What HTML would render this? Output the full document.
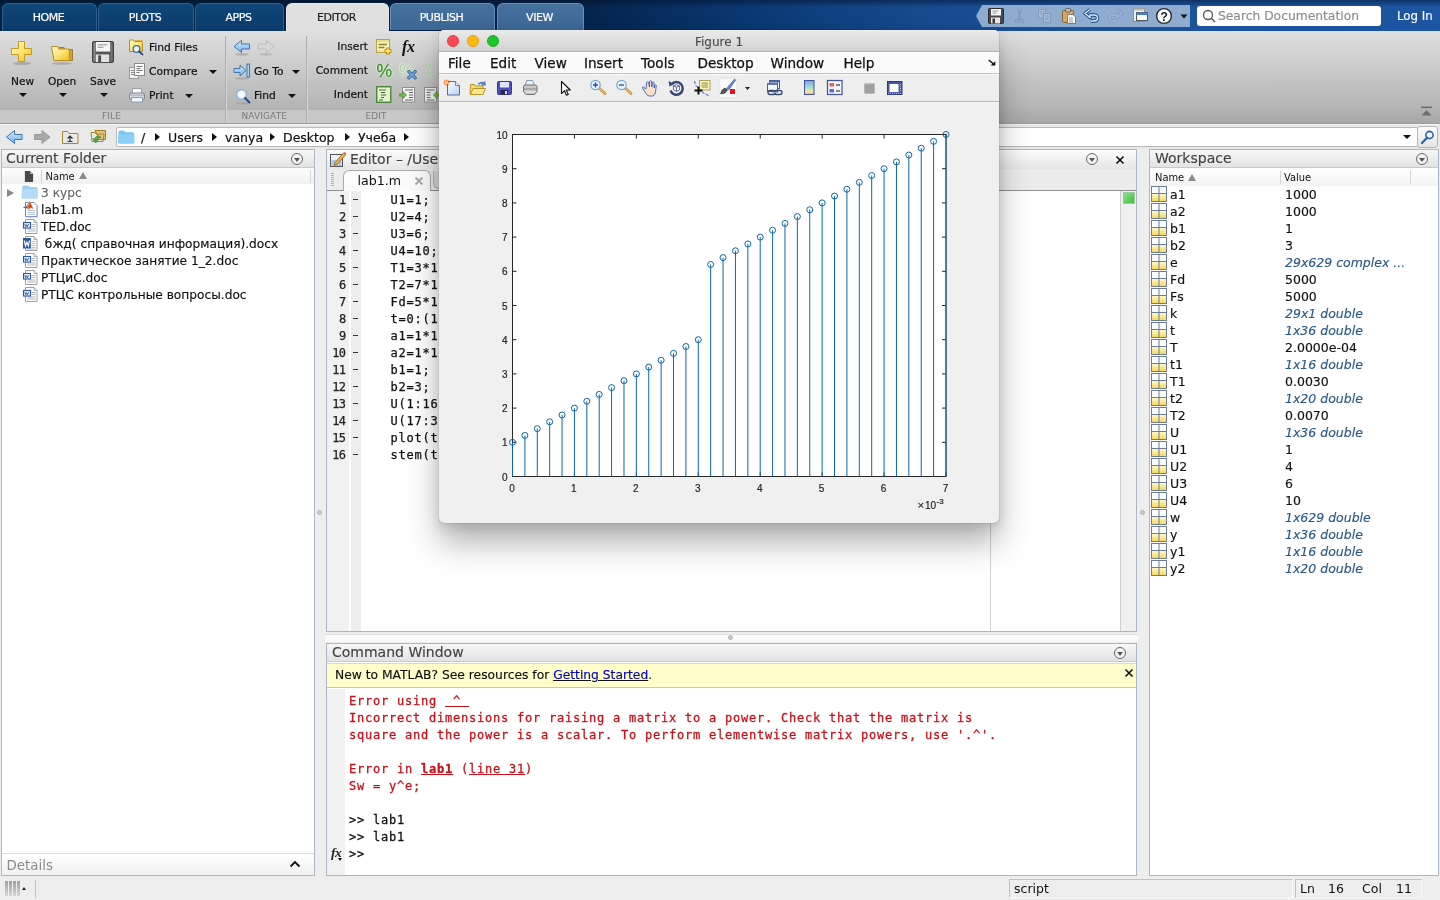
<!DOCTYPE html>
<html lang="ru">
<head>
<meta charset="utf-8">
<title>MATLAB</title>
<style>
*{box-sizing:border-box;margin:0;padding:0}
html,body{width:1440px;height:900px;overflow:hidden;background:#e6e6e6;font-family:"DejaVu Sans","Liberation Sans",sans-serif;font-size:12px;color:#111}
.abs{position:absolute}
#root{position:absolute;left:0;top:0;width:1440px;height:900px;overflow:hidden;background:#eeeeee;will-change:transform;transform:translateZ(0)}
/* ---------- tab bar ---------- */
#tabbar{left:0;top:0;width:1440px;height:32px;background:linear-gradient(180deg,rgba(0,10,30,.45) 0,rgba(0,10,30,0) 7px),linear-gradient(90deg,#04213f 0,#04234a 40%,#0a3872 52%,#164a8e 64%,#1b519a 75%,#1c55a2 100%)}
.tab{position:absolute;top:8px;height:24px;border-radius:6px 6px 0 0;background:linear-gradient(180deg,#0f4679 0,#0b3a6a 100%);border:1px solid #2f5f90;border-bottom:none;color:#fff;font-size:11px;text-align:center;line-height:19px;letter-spacing:-.45px;padding-right:2px;-webkit-text-stroke:.2px currentColor}
.tab.lite{background:linear-gradient(180deg,#46709e,#3d6896);border-color:#6d8fb5}
.tab.act{top:3px;height:29px;background:#e0e0e0;border-color:#e8e8e8;color:#222;line-height:27px}
/* ---------- toolstrip ---------- */
#strip{left:0;top:31px;width:1440px;height:93px;background:linear-gradient(180deg,#dfdfdf 0,#d0d0d0 30%,#b6b6b6 80%,#a6a6a6 100%)}
#striplab{left:0;top:110px;width:999px;height:13px;background:#c8c8c8}
.sl{position:absolute;top:111px;font-size:9px;line-height:11px;color:#7a7a7a;letter-spacing:.1px}
.tb{position:absolute;font-size:12px;color:#111;white-space:nowrap;-webkit-text-stroke:.2px #111}
.dn{position:absolute;width:0;height:0;border-left:4px solid transparent;border-right:4px solid transparent;border-top:4px solid #111}
.vsep{position:absolute;top:36px;width:1px;height:86px;background:#adadad;box-shadow:1px 0 0 #d6d6d6}
/* ---------- address bar ---------- */
#addr{left:0;top:124px;width:1440px;height:25px;background:#e9e9e9;border-top:1px solid #f4f4f4}
#addrbox{left:116px;top:127px;width:1302px;height:20px;background:#fff;border:1px solid #b9b9b9;border-radius:2px}
.crumb{position:absolute;top:130px;font-size:12.500px;color:#111;white-space:nowrap;-webkit-text-stroke:.2px #111}
.tri{position:absolute;width:0;height:0;border-top:4px solid transparent;border-bottom:4px solid transparent;border-left:5px solid #111}
/* ---------- panels ---------- */
.panel{position:absolute;background:#fff;border:1px solid #a9b7c6}
.ptitle{position:absolute;left:0;top:0;right:0;height:18px;background:linear-gradient(180deg,#f7f7f7,#e3e3e3);border-bottom:1px solid #c9c9c9;font-size:14px;color:#444;line-height:17px;padding-left:4px;white-space:nowrap;overflow:hidden;-webkit-text-stroke:.15px #444}
.pbtn{position:absolute;top:3px;width:12px;height:12px;border:1px solid #666;border-radius:50%;background:#f4f4f4}
.pbtn:after{content:"";position:absolute;left:2px;top:3.5px;border-left:3px solid transparent;border-right:3px solid transparent;border-top:4px solid #555}
.row{position:absolute;font-size:12.5px;white-space:nowrap;color:#111;-webkit-text-stroke:.15px currentColor}
.ln{left:0;width:18.500px;margin-top:1px;text-align:right;font-size:12px;letter-spacing:-.6px;line-height:17px;color:#222;-webkit-text-stroke:.25px #222}
.cd{left:63.500px;margin-top:1px;font-size:12px;letter-spacing:.776px;line-height:17px;color:#111;white-space:pre;-webkit-text-stroke:.25px #111}
.cw{left:22px;margin-top:1px;font-size:12px;letter-spacing:.776px;line-height:17px;color:#111;white-space:pre;-webkit-text-stroke:.28px currentColor}
.mono{font-family:"DejaVu Sans Mono","Liberation Mono",monospace}
</style>
</head>
<body>
<div id="root">

<!-- TABBAR -->
<div id="tabbar" class="abs">
<div class="tab" style="left:2px;width:95px;top:3px;height:29px;line-height:27px">HOME</div>
<div class="tab" style="left:98px;width:96px;top:3px;height:29px;line-height:27px">PLOTS</div>
<div class="tab" style="left:195px;width:89px;top:3px;height:29px;line-height:27px">APPS</div>
<div class="tab act" style="left:286px;width:103px">EDITOR</div>
<div class="tab lite" style="left:390px;width:105px;top:3px;height:27px;line-height:27px">PUBLISH</div>
<div class="tab lite" style="left:497px;width:87px;top:3px;height:27px;line-height:27px">VIEW</div>
<!-- quick access -->
<div class="abs" style="left:976px;top:5px;width:214px;height:22px;background:#8eabd0;clip-path:polygon(0 50%,6px 0,100% 0,100% 100%,6px 100%)"></div>
<svg class="abs" style="left:977px;top:5px" width="214" height="22" viewBox="977 5 214 22">
<!-- save -->
<rect x="988.500" y="8.500" width="15" height="15" rx="1" fill="#4a4a4a" stroke="#2c2c2c"/><rect x="991" y="9" width="10" height="6.500" fill="#f4f4f4"/><path d="M992.500 11h6M992.500 13h4" stroke="#888" stroke-width=".8"/><rect x="991" y="17.500" width="9" height="6" fill="#e8e8e8"/><rect x="992.500" y="18.500" width="2.500" height="5" fill="#3a3a3a"/>
<!-- cut faded -->
<g fill="none" stroke="#7d98bd" stroke-width="1.100"><path d="M1021.500 8.500l-3 11M1017.500 8.500l3 11"/><circle cx="1017" cy="21" r="1.800"/><circle cx="1022" cy="21" r="1.800"/></g>
<!-- copy faded -->
<g fill="#a4bad6" stroke="#7d98bd" stroke-width=".9"><rect x="1038.500" y="9.500" width="7" height="8.500"/><rect x="1043.500" y="13.500" width="7" height="9"/></g><path d="M1040 12h4M1040 14h3M1045 16h4M1045 18h4M1045 20h4" stroke="#7d98bd" stroke-width=".7"/>
<!-- paste -->
<rect x="1062.500" y="10.500" width="11" height="12" rx="1" fill="#d8a860" stroke="#8a6428"/><rect x="1065.500" y="8.500" width="5" height="3.500" rx="1" fill="#c0c0c0" stroke="#555" stroke-width=".8"/><path d="M1067.500 14.500h5.500l2.500 2.500v6.500h-8z" fill="#fafafa" stroke="#666" stroke-width=".8"/><path d="M1069 18h4M1069 20h4M1069 22h4" stroke="#777" stroke-width=".7"/>
<!-- undo -->
<path d="M1090 9.500l-5 4 5 4v-2.500h4q3.500 0 3.500 3t-3.500 3h-3.500" fill="none" stroke="#1c4a88" stroke-width="3.400" stroke-linejoin="round"/><path d="M1090 9.500l-5 4 5 4v-2.500h4q3.500 0 3.500 3t-3.500 3h-3.500" fill="none" stroke="#d8ecfa" stroke-width="1.500" stroke-linejoin="round"/>
<!-- redo faded -->
<path d="M1117 9.500l5 4-5 4v-2.500h-4q-3.500 0-3.500 3t3.500 3h3.500" fill="none" stroke="#7d98bd" stroke-width="3.200" stroke-linejoin="round"/><path d="M1117 9.500l5 4-5 4v-2.500h-4q-3.500 0-3.500 3t3.500 3h3.500" fill="none" stroke="#9fb8d8" stroke-width="1.400" stroke-linejoin="round"/>
<!-- windows -->
<rect x="1133.500" y="8.500" width="11" height="13" fill="#f0f0f0" stroke="#8a8a8a"/><rect x="1133.500" y="8.500" width="11" height="2" fill="#bcbcbc"/><rect x="1136.500" y="12.500" width="11" height="8" fill="#fafafa" stroke="#555"/><rect x="1136.500" y="12.500" width="11" height="2.500" fill="#4a80c0"/>
<!-- help -->
<circle cx="1164" cy="16" r="7.400" fill="#fdfdfd" stroke="#2a2a2a" stroke-width="1.400"/><text x="1164" y="20.500" text-anchor="middle" font-family="'Liberation Sans',sans-serif" font-weight="bold" font-size="12.500px" fill="#222">?</text>
<path d="M1180.500 14.500h7l-3.500 4z" fill="#111"/>
</svg>
<div class="abs" style="left:1197px;top:6px;width:184px;height:20px;background:#fff;border-radius:3px"></div>
<svg class="abs" style="left:1201px;top:8px" width="16" height="16" viewBox="0 0 16 16"><circle cx="7" cy="7" r="4.5" fill="none" stroke="#555" stroke-width="1.3"/><path d="M10.3 10.3L14 14" stroke="#555" stroke-width="1.5"/></svg>
<div class="abs" style="left:1218px;top:7px;font-size:12.300px;color:#8c8c8c;line-height:18px;white-space:nowrap;-webkit-text-stroke:.15px #8c8c8c">Search Documentation</div>
<div class="abs" style="left:1397px;top:7px;font-size:11.800px;color:#fff;line-height:18px;white-space:nowrap;-webkit-text-stroke:.15px #fff">Log In</div>
</div>
<!-- STRIP -->
<div id="strip" class="abs"></div>
<div id="striplab" class="abs"></div>
<div class="abs" style="left:0;top:123px;width:1440px;height:1px;background:#9c9c9c"></div>
<!-- FILE section -->
<svg class="abs" style="left:10px;top:40px" width="24" height="26" viewBox="0 0 24 26">
<defs><linearGradient id="gy" x1="0" y1="0" x2="1" y2="1"><stop offset="0" stop-color="#fffbd0"/><stop offset=".55" stop-color="#fbe36a"/><stop offset="1" stop-color="#e9b820"/></linearGradient></defs>
<ellipse cx="12" cy="23.5" rx="9" ry="1.6" fill="#8d8d8d" opacity=".55"/>
<path d="M8.5 1.5h6v7h7v6h-7v7h-6v-7h-7v-6h7z" fill="url(#gy)" stroke="#c79a1c" stroke-width="1" stroke-linejoin="round"/></svg>
<svg class="abs" style="left:50px;top:44px" width="25" height="22" viewBox="0 0 25 22">
<ellipse cx="12" cy="19.5" rx="10" ry="1.5" fill="#8d8d8d" opacity=".5"/>
<path d="M9 3.5h5l1 2h7.5v11h-4z" fill="#c9a24a" stroke="#a27b25" stroke-width="1"/>
<path d="M1.5 2.5h6l1.5 2.5h10l1 11.5h-16z" fill="url(#gy)" stroke="#b48d2c" stroke-width="1" stroke-linejoin="round"/></svg>
<svg class="abs" style="left:92px;top:41px" width="22" height="23" viewBox="0 0 23 24">
<rect x=".5" y=".5" width="22" height="22" rx="1.5" fill="#555" stroke="#3d3d3d"/>
<rect x="1.5" y="1.5" width="2" height="20" fill="#8c8c8c"/><rect x="19.5" y="1.5" width="2" height="20" fill="#777"/>
<rect x="4" y="1" width="15" height="10" fill="#f4f4f4"/><rect x="6" y="3.5" width="10" height="1" fill="#8a8a8a"/><rect x="6" y="6" width="6" height="1" fill="#8a8a8a"/>
<rect x="4" y="14" width="14" height="8" fill="#e2e2e2"/><rect x="6.500" y="15" width="3" height="7" fill="#4a4a4a"/></svg>
<div class="tb" style="left:11px;top:74px;font-size:10.6px;line-height:14px">New</div>
<div class="tb" style="left:48px;top:74px;font-size:10.6px;line-height:14px">Open</div>
<div class="tb" style="left:90px;top:74px;font-size:10.6px;line-height:14px">Save</div>
<div class="dn" style="left:19px;top:93px"></div><div class="dn" style="left:59px;top:93px"></div><div class="dn" style="left:100px;top:93px"></div>
<!-- find files -->
<svg class="abs" style="left:128px;top:38px" width="18" height="18" viewBox="0 0 18 18">
<path d="M1.5 2h4l1 1.500h8v10h-13z" fill="url(#gy)" stroke="#b48d2c"/><path d="M7 2.500h7.500v3" fill="none" stroke="#d9b256"/>
<circle cx="8.500" cy="11" r="3.300" fill="#eaf3fb" stroke="#3d6fa8" stroke-width="1.300"/><path d="M11 13.500l3.500 3" stroke="#2d4f7d" stroke-width="1.800" stroke-linecap="round"/></svg>
<div class="tb" style="left:149px;top:41px;font-size:10.700px;line-height:14px">Find Files</div>
<svg class="abs" style="left:128px;top:62px" width="18" height="18" viewBox="0 0 18 18">
<rect x="1.500" y="5.500" width="9" height="11" fill="#f3f3f3" stroke="#9a9a9a"/><path d="M3 8.500h5M3 10.500h4M3 12.500h5" stroke="#8a8a8a"/>
<rect x="6.500" y="1.500" width="10" height="12" fill="#fafafa" stroke="#8a8a8a"/><path d="M8.500 4.500h6M8.500 6.500h4M8.500 8.500h6M8.500 10.500h3" stroke="#777"/></svg>
<div class="tb" style="left:149px;top:65px;font-size:10.700px;line-height:14px">Compare</div><div class="dn" style="left:209px;top:70px"></div>
<svg class="abs" style="left:128px;top:87px" width="18" height="17" viewBox="0 0 18 17">
<rect x="4.500" y="1.500" width="9" height="5" fill="#fdfdfd" stroke="#9aa4b0"/><rect x="1.500" y="6" width="15" height="6.500" rx="1.500" fill="#d5dbe2" stroke="#7f8894"/>
<rect x="3.500" y="10.500" width="11" height="4.500" fill="#f2f6fb" stroke="#8d9fb8"/><rect x="2" y="7.500" width="14" height="1.200" fill="#aab3be"/></svg>
<div class="tb" style="left:149px;top:89px;font-size:10.700px;line-height:14px">Print</div><div class="dn" style="left:185px;top:94px"></div>
<div class="vsep" style="left:225px"></div>
<!-- NAVIGATE -->
<svg class="abs" style="left:233px;top:39px" width="42" height="17" viewBox="0 0 42 17">
<defs><linearGradient id="gb" x1="0" y1="0" x2="0" y2="1"><stop offset="0" stop-color="#d8ecfb"/><stop offset="1" stop-color="#6fb0e6"/></linearGradient></defs>
<ellipse cx="9" cy="15.300" rx="7" ry="1.200" fill="#8a8a8a" opacity=".5"/><ellipse cx="33" cy="15.300" rx="7" ry="1.200" fill="#8a8a8a" opacity=".35"/>
<path d="M1 7.500l7.500-6v3.500h8v5h-8v3.500z" fill="url(#gb)" stroke="#3a78b8" stroke-linejoin="round"/>
<path d="M41 7.500l-7.500-6v3.500h-8v5h8v3.500z" fill="#d8d8d8" stroke="#bdbdbd" stroke-linejoin="round"/></svg>
<svg class="abs" style="left:233px;top:63px" width="18" height="17" viewBox="0 0 18 17">
<ellipse cx="9" cy="15.500" rx="7" ry="1.100" fill="#8a8a8a" opacity=".45"/>
<path d="M1 5.500h6v-3.500l6 5.500-6 5.500v-3.500h-6z" fill="url(#gb)" stroke="#3a78b8" stroke-linejoin="round"/><rect x="14" y="1" width="2.500" height="13" fill="#a8d0f2" stroke="#3a78b8"/></svg>
<div class="tb" style="left:254px;top:65px;font-size:10.700px;line-height:14px">Go To</div><div class="dn" style="left:292px;top:70px"></div>
<svg class="abs" style="left:234px;top:88px" width="18" height="17" viewBox="0 0 18 17">
<ellipse cx="8" cy="15.500" rx="6" ry="1.100" fill="#8a8a8a" opacity=".4"/>
<circle cx="7.500" cy="6.500" r="4.800" fill="#f3f8fd" stroke="#8fb3d8" stroke-width="1.400"/><path d="M11 10l4.500 4.500" stroke="#2d4f86" stroke-width="2.200" stroke-linecap="round"/></svg>
<div class="tb" style="left:254px;top:89px;font-size:10.700px;line-height:14px">Find</div><div class="dn" style="left:288px;top:94px"></div>
<div class="vsep" style="left:306px"></div>
<!-- EDIT -->
<div class="tb" style="left:280px;width:88px;text-align:right;top:40px;font-size:10.700px;line-height:14px">Insert</div>
<div class="tb" style="left:280px;width:88px;text-align:right;top:64px;font-size:10.700px;line-height:14px">Comment</div>
<div class="tb" style="left:280px;width:88px;text-align:right;top:88px;font-size:10.700px;line-height:14px">Indent</div>
<svg class="abs" style="left:375px;top:38px" width="19" height="18" viewBox="0 0 19 18">
<rect x="1.500" y="1.500" width="13" height="13" fill="#fdf6b4" stroke="#b4a544"/><rect x="2" y="2" width="12" height="2.200" fill="#e9df88"/><rect x="2" y="12" width="12" height="2" fill="#eee4a0"/><path d="M3.500 6.500h8.500M3.500 9.500h6" stroke="#85803c" stroke-width="1.300"/>
<path d="M13 9.500v7M9.500 13h7" stroke="#b88a14" stroke-width="3.600"/><path d="M13 10.400v5.200M10.400 13h5.200" stroke="#ffe55c" stroke-width="1.800"/></svg>
<div class="abs" style="left:402px;top:37px;font-family:'Liberation Serif','DejaVu Serif',serif;font-style:italic;font-weight:bold;font-size:16px;line-height:20px;color:#111;letter-spacing:-.3px">fx</div>
<div class="abs" style="left:376.500px;top:60px;font-size:17.500px;line-height:22px;color:#3f9a2c;font-family:'Liberation Sans',sans-serif;text-shadow:0 0 1.500px #fff,0 0 1.500px #fff,0 0 2px #e8f8e0;-webkit-text-stroke:.3px #2f7f20">%</div>
<div class="abs" style="left:399px;top:60px;font-size:17px;line-height:22px;color:#a8d098;font-family:'Liberation Sans',sans-serif;text-shadow:0 0 1.500px #fff,0 0 1.500px #fff">%</div>
<svg class="abs" style="left:406.500px;top:70px" width="10" height="9.500" viewBox="0 0 12 12"><path d="M2 2l8 8M10 2l-8 8" stroke="#2d5f96" stroke-width="4" stroke-linecap="round"/><path d="M2 2l8 8M10 2l-8 8" stroke="#6fa8dc" stroke-width="2" stroke-linecap="round"/></svg>
<div class="abs" style="left:424.500px;top:63px;font-size:9.500px;line-height:7.500px;color:#7ab868;font-family:'Liberation Sans',sans-serif;width:10px;text-shadow:0 0 1.500px #fff,0 0 1px #fff">% %</div>
<svg class="abs" style="left:376px;top:86px" width="16" height="18" viewBox="0 0 16 18"><rect x=".750" y=".750" width="14" height="15.500" fill="#e4f2d0" stroke="#3f7f2f" stroke-width="1.300"/><path d="M3 4h7M5 6.500h4M5 9h5M5 11.500h3M3 14h4" stroke="#3f6f2f" stroke-width="1.100"/></svg>
<svg class="abs" style="left:399px;top:86px" width="18" height="18" viewBox="0 0 18 18"><rect x="3.500" y="1.500" width="12" height="14.500" fill="#f4f4f4" stroke="#8e8e8e"/><path d="M6 4h8M10 6.500h4M10 9h4M10 11.500h4M6 14h8" stroke="#666" stroke-width="1.100"/><path d="M0 8h4v-2.500l3.500 3.500-3.500 3.500v-2.500h-4z" fill="#7cc24c" stroke="#3f8f22" stroke-width=".8"/></svg>
<svg class="abs" style="left:424px;top:86px" width="18" height="18" viewBox="0 0 18 18"><rect x=".500" y="1.500" width="12" height="14.500" fill="#f4f4f4" stroke="#8e8e8e"/><path d="M2.500 4h8M2.500 6.500h4M2.500 9h4M2.500 11.500h4M2.500 14h8" stroke="#666" stroke-width="1.100"/><path d="M17 8h-4v-2.500l-3.500 3.500 3.500 3.500v-2.500h4z" fill="#7cc24c" stroke="#3f8f22" stroke-width=".8"/></svg>
<div class="sl" style="left:102px">FILE</div><div class="sl" style="left:241.500px">NAVIGATE</div><div class="sl" style="left:365.500px">EDIT</div>
<!-- collapse icon -->
<svg class="abs" style="left:1420px;top:105px" width="14" height="14" viewBox="0 0 14 14"><rect x="1" y="1.500" width="11" height="1.600" fill="#6e6e6e"/><path d="M6.500 5l5 5.500h-10z" fill="#6e6e6e"/></svg>
<!-- ADDR -->
<div id="addr" class="abs"></div>
<svg class="abs" style="left:5px;top:129px" width="104" height="17" viewBox="0 0 104 17">
<path d="M1.500 8l8-6.500v4h7.500v5h-7.500v4z" fill="url(#gb)" stroke="#3a78b8" stroke-linejoin="round"/>
<path d="M45 8l-8-6.500v4h-7.500v5h7.500v4z" fill="#a9a9a9" stroke="#9a9a9a" stroke-linejoin="round"/>
<path d="M57.500 2.500h5l1.500 2h9v10h-15.500z" fill="url(#gf)" stroke="#a8862c"/><path d="M65 12.500v-5M62.500 9.500l2.500-2.500 2.500 2.500M62.500 12.500h5" fill="none" stroke="#333" stroke-width="1.200"/>
<path d="M90 1.500h10.500v9h-6z" fill="#e4c47c" stroke="#a27b25"/><path d="M86 3.500h4l1 1.500h8l-1 7.500h-11z" fill="url(#gf)" stroke="#a8862c"/>
<path d="M96 8.500c-1.500-2.500-5.500-2-6 1.500l-2.200-.3 2.800 4.300 3.300-3.700-2-.2c.5-1.600 2.500-2 4.100-1.600z" fill="#5fae3a" stroke="#2f7a1c" stroke-width=".7"/></svg>
<div id="addrbox" class="abs"></div>
<svg class="abs" style="left:118px;top:129px" width="18" height="16" viewBox="0 0 18 16"><path d="M.500 3q0-1.500 1.500-1.500h4l1.500 1.700h7q1.500 0 1.500 1.500v8.300q0 1.500-1.500 1.500h-13q-1.500 0-1.500-1.500z" fill="#7cc4ee"/><path d="M.500 5.500h16v7.500q0 1.500-1.500 1.500h-13q-1.500 0-1.500-1.500z" fill="#8dd0f5"/></svg>
<div class="crumb" style="left:141px">/</div><div class="tri" style="left:155px;top:133px"></div>
<div class="crumb" style="left:168px">Users</div><div class="tri" style="left:212px;top:133px"></div>
<div class="crumb" style="left:225px">vanya</div><div class="tri" style="left:270px;top:133px"></div>
<div class="crumb" style="left:283px">Desktop</div><div class="tri" style="left:345px;top:133px"></div>
<div class="crumb" style="left:358px">Учеба</div><div class="tri" style="left:404px;top:133px"></div>
<div class="dn" style="left:1403px;top:135px"></div>
<div class="abs" style="left:1417px;top:126px;width:21px;height:22px;border:1px solid #b5b5b5;border-radius:3px;background:linear-gradient(#fdfdfd,#e4e4e4)"></div>
<svg class="abs" style="left:1420px;top:129px" width="16" height="16" viewBox="0 0 16 16"><circle cx="9.500" cy="6" r="3.600" fill="none" stroke="#2a63ad" stroke-width="1.600"/><path d="M7 8.800L2 14" stroke="#2a63ad" stroke-width="2.200" stroke-linecap="round"/></svg>
<!-- PANELS -->
<div class="panel" style="left:1px;top:149px;width:314px;height:727px">
<div class="ptitle">Current Folder</div><div class="pbtn" style="left:289px"></div>
<div class="abs" style="left:0;top:18px;width:312px;height:16px;background:linear-gradient(#fdfdfd,#f1f1f1)"></div>
<svg class="abs" style="left:22px;top:20.500px" width="10" height="11.500" viewBox="0 0 12 14"><path d="M1 0h6.500l3.500 3.500v10.500h-10z" fill="#4a4a4a"/><path d="M7.500 0v3.500h3.500" fill="#bbb"/></svg>
<div class="abs" style="left:39px;top:20px;width:1px;height:13px;background:#d4d4d4"></div>
<div class="abs" style="left:43.500px;top:20px;font-family:'DejaVu Sans Condensed','DejaVu Sans',sans-serif;font-size:11px;line-height:14px;color:#111">Name</div>
<div class="abs" style="left:77px;top:22px;width:0;height:0;border-left:4px solid transparent;border-right:4px solid transparent;border-bottom:7px solid #8a8a8a"></div>
<div class="abs" style="left:308px;top:20px;width:1px;height:13px;background:#d4d4d4"></div>
<svg class="abs" style="left:19px;top:34px" width="18" height="16" viewBox="0 0 18 16"><path d="M1.500 2.500q0-1 1-1h4.500l1.500 1.500h7q1 0 1 1v9.500q0 1-1 1h-14q-1 0-1-1z" fill="#9fd0f2"/><path d="M1.500 5h15v8.500q0 1-1 1h-13q-1 0-1-1z" fill="#b4dcf6"/></svg><div class="abs" style="left:5px;top:39px;width:0;height:0;border-top:4.500px solid transparent;border-bottom:4.500px solid transparent;border-left:7.500px solid #8a8a8a"></div><div class="row" style="left:39px;top:35px;color:#666;font-size:12.200px;line-height:16px">3 курс</div>
<svg class="abs" style="left:20px;top:51px" width="17" height="17" viewBox="0 0 17 17"><path d="M3.500 1.500h8.500l3 3v11h-11.500z" fill="#fff" stroke="#7888b0"/><path d="M4 16h11.500v-10" fill="none" stroke="#a8b0c8" stroke-width=".8"/><path d="M5.500 9.500h7.500M5.500 11.500h7.500M5.500 13.500h7.500" stroke="#b4c0d4"/><path d="M1 6.500l3.500-1.500 3-4.500q1.500 1.500 2.500 4.500l1.500 3-2.500-1.200-2.200 1.700-2.300-1.500z" fill="#d8511f"/><path d="M7.500 .500l-2 5 2 3.200" fill="none" stroke="#f8b860" stroke-width=".9"/><path d="M1 6.500l3.500-1.500 1 1.800-1 .700z" fill="#3a6fb8"/></svg><div class="row" style="left:39px;top:52px;color:#111;font-size:12.200px;line-height:16px">lab1.m</div>
<svg class="abs" style="left:20px;top:68px" width="17" height="17" viewBox="0 0 17 17"><path d="M3.500 1.500h8.500l3 3v11h-11.500z" fill="#fff" stroke="#9aa0a8"/><path d="M12 1.500v3h3" fill="none" stroke="#9aa0a8" stroke-width=".8"/><path d="M9.500 6.500h4M9.500 8.500h4M5.500 11h8M5.500 13h8" stroke="#b0b4bc"/><rect x="1.500" y="4.500" width="7" height="5.500" fill="#eef2fa" stroke="#2a56a8" stroke-width="1.100"/><path d="M2.800 6l.9 2.800.9-2 .9 2 .9-2.800" fill="none" stroke="#2a56a8" stroke-width=".9"/></svg><div class="row" style="left:39px;top:69px;color:#111;font-size:12.200px;line-height:16px">TED.doc</div>
<svg class="abs" style="left:20px;top:85px" width="17" height="17" viewBox="0 0 17 17"><path d="M3.500 1.500h8.500l3 3v11h-11.500z" fill="#fff" stroke="#9aa0a8"/><path d="M12 1.500v3h3" fill="none" stroke="#9aa0a8" stroke-width=".8"/><path d="M9.500 6.500h4M9.500 8.500h4M9.500 10.500h4M9.500 12.500h4M5.500 14h8" stroke="#b8bcc4"/><rect x="1" y="3" width="7.800" height="10.500" fill="#2a56a8"/><path d="M2.200 5.500l1.300 5.500 1.400-4 1.400 4 1.300-5.500" fill="none" stroke="#fff" stroke-width="1.150"/></svg><div class="row" style="left:39px;top:86px;color:#111;font-size:12.200px;line-height:16px"> бжд( справочная информация).docx</div>
<svg class="abs" style="left:20px;top:102px" width="17" height="17" viewBox="0 0 17 17"><path d="M3.500 1.500h8.500l3 3v11h-11.500z" fill="#fff" stroke="#9aa0a8"/><path d="M12 1.500v3h3" fill="none" stroke="#9aa0a8" stroke-width=".8"/><path d="M9.500 6.500h4M9.500 8.500h4M5.500 11h8M5.500 13h8" stroke="#b0b4bc"/><rect x="1.500" y="4.500" width="7" height="5.500" fill="#eef2fa" stroke="#2a56a8" stroke-width="1.100"/><path d="M2.800 6l.9 2.800.9-2 .9 2 .9-2.800" fill="none" stroke="#2a56a8" stroke-width=".9"/></svg><div class="row" style="left:39px;top:103px;color:#111;font-size:12.200px;line-height:16px">Практическое занятие 1_2.doc</div>
<svg class="abs" style="left:20px;top:119px" width="17" height="17" viewBox="0 0 17 17"><path d="M3.500 1.500h8.500l3 3v11h-11.500z" fill="#fff" stroke="#9aa0a8"/><path d="M12 1.500v3h3" fill="none" stroke="#9aa0a8" stroke-width=".8"/><path d="M9.500 6.500h4M9.500 8.500h4M5.500 11h8M5.500 13h8" stroke="#b0b4bc"/><rect x="1.500" y="4.500" width="7" height="5.500" fill="#eef2fa" stroke="#2a56a8" stroke-width="1.100"/><path d="M2.800 6l.9 2.800.9-2 .9 2 .9-2.800" fill="none" stroke="#2a56a8" stroke-width=".9"/></svg><div class="row" style="left:39px;top:120px;color:#111;font-size:12.200px;line-height:16px">РТЦиС.doc</div>
<svg class="abs" style="left:20px;top:136px" width="17" height="17" viewBox="0 0 17 17"><path d="M3.500 1.500h8.500l3 3v11h-11.500z" fill="#fff" stroke="#9aa0a8"/><path d="M12 1.500v3h3" fill="none" stroke="#9aa0a8" stroke-width=".8"/><path d="M9.500 6.500h4M9.500 8.500h4M5.500 11h8M5.500 13h8" stroke="#b0b4bc"/><rect x="1.500" y="4.500" width="7" height="5.500" fill="#eef2fa" stroke="#2a56a8" stroke-width="1.100"/><path d="M2.800 6l.9 2.800.9-2 .9 2 .9-2.800" fill="none" stroke="#2a56a8" stroke-width=".9"/></svg><div class="row" style="left:39px;top:137px;color:#111;font-size:12.200px;line-height:16px">РТЦС контрольные вопросы.doc</div>

<div class="abs" style="left:0;top:703px;width:312px;height:22px;background:linear-gradient(#ffffff,#f1f1f1);border-top:1px solid #dcdcdc;font-size:13.400px;line-height:23px;color:#8c8c8c;padding-left:4.500px">Details</div>
<svg class="abs" style="left:287px;top:709px" width="12" height="10" viewBox="0 0 12 10"><path d="M1.500 7.500l4.500-4.500 4.500 4.500" fill="none" stroke="#111" stroke-width="1.800"/></svg>
</div>
<div class="panel" style="left:326px;top:149px;width:811px;height:483px;overflow:hidden">
<div class="ptitle" style="height:19px;padding-left:23px;background:linear-gradient(#fcfcfc,#e6e6e6);border-bottom:none;line-height:19px">Editor – /Users/vanya/Desktop/Учеба/lab1.m</div>
<svg class="abs" style="left:2px;top:1px" width="18" height="17" viewBox="0 0 18 17"><rect x="1.500" y="3.500" width="12" height="12" fill="#eaf1f8" stroke="#555"/><rect x="2.500" y="9" width="10" height="6" fill="#a9c8e6"/><path d="M6 11.500l8.500-9.500 2 1.800-8.500 9.500-2.800 1z" fill="#f2b04a" stroke="#8a5a1a" stroke-width=".8"/><path d="M14.500 2l1-1 2 1.800-1 1z" fill="#d94a6a"/></svg>
<div class="pbtn" style="left:759px;top:3px"></div>
<svg class="abs" style="left:788px;top:5px" width="10" height="10" viewBox="0 0 10 10"><path d="M1.500 1.500l7 7M8.500 1.500l-7 7" stroke="#111" stroke-width="1.600"/></svg>
<div class="abs" style="left:0;top:19px;width:809px;height:22px;background:#ececec;border-bottom:1px solid #8e8e8e"></div>
<div class="abs" style="left:4px;top:23px;width:3px;height:14px;background:repeating-linear-gradient(#b0b0b0 0,#b0b0b0 1px,transparent 1px,transparent 2px)"></div>
<div class="abs" style="left:16px;top:20px;width:88px;height:21px;background:#fbfbfb;border:1px solid #a8a8a8;border-bottom:none;border-radius:6px 6px 0 0"></div>
<div class="abs" style="left:30.500px;top:22px;font-size:12.600px;line-height:18px;color:#111">lab1.m</div>
<svg class="abs" style="left:87px;top:26px" width="10" height="10" viewBox="0 0 10 10"><path d="M1.500 1.500l7 7M8.500 1.500l-7 7" stroke="#a6a6a6" stroke-width="1.800"/></svg>
<div class="abs" style="left:106px;top:21px;width:20px;height:18px;background:#dcdcdc;border:1px solid #b0b0b0;border-top:none;border-radius:0 0 6px 6px"></div>
<div class="abs" style="left:0;top:41px;width:22px;height:441px;background:#f1f1f1"></div>
<div class="abs" style="left:24px;top:41px;width:10px;height:441px;background:#ededed"></div>
<div class="abs" style="left:663px;top:41px;width:1px;height:441px;background:#d0d0d0"></div>
<div class="abs" style="left:793px;top:41px;width:16px;height:441px;background:#f0f0f0;border-left:1px solid #cfcfcf"></div>
<div class="abs" style="left:796px;top:42px;width:12px;height:12px;background:linear-gradient(135deg,#8ee08a,#3cc03c);border:1px solid #9ec89e"></div>
<div class="abs mono ln" style="top:41px">1</div><div class="abs" style="left:26px;top:49px;width:5px;height:1.300px;background:#333"></div><div class="abs mono cd" style="top:41px">U1=1;</div>
<div class="abs mono ln" style="top:58px">2</div><div class="abs" style="left:26px;top:66px;width:5px;height:1.300px;background:#333"></div><div class="abs mono cd" style="top:58px">U2=4;</div>
<div class="abs mono ln" style="top:75px">3</div><div class="abs" style="left:26px;top:83px;width:5px;height:1.300px;background:#333"></div><div class="abs mono cd" style="top:75px">U3=6;</div>
<div class="abs mono ln" style="top:92px">4</div><div class="abs" style="left:26px;top:100px;width:5px;height:1.300px;background:#333"></div><div class="abs mono cd" style="top:92px">U4=10;</div>
<div class="abs mono ln" style="top:109px">5</div><div class="abs" style="left:26px;top:117px;width:5px;height:1.300px;background:#333"></div><div class="abs mono cd" style="top:109px">T1=3*10^-3;</div>
<div class="abs mono ln" style="top:126px">6</div><div class="abs" style="left:26px;top:134px;width:5px;height:1.300px;background:#333"></div><div class="abs mono cd" style="top:126px">T2=7*10^-3;</div>
<div class="abs mono ln" style="top:143px">7</div><div class="abs" style="left:26px;top:151px;width:5px;height:1.300px;background:#333"></div><div class="abs mono cd" style="top:143px">Fd=5*10^3;</div>
<div class="abs mono ln" style="top:160px">8</div><div class="abs" style="left:26px;top:168px;width:5px;height:1.300px;background:#333"></div><div class="abs mono cd" style="top:160px">t=0:(1/Fd):T2;</div>
<div class="abs mono ln" style="top:177px">9</div><div class="abs" style="left:26px;top:185px;width:5px;height:1.300px;background:#333"></div><div class="abs mono cd" style="top:177px">a1=1*10^3;</div>
<div class="abs mono ln" style="top:194px">10</div><div class="abs" style="left:26px;top:202px;width:5px;height:1.300px;background:#333"></div><div class="abs mono cd" style="top:194px">a2=1*10^3;</div>
<div class="abs mono ln" style="top:211px">11</div><div class="abs" style="left:26px;top:219px;width:5px;height:1.300px;background:#333"></div><div class="abs mono cd" style="top:211px">b1=1;</div>
<div class="abs mono ln" style="top:228px">12</div><div class="abs" style="left:26px;top:236px;width:5px;height:1.300px;background:#333"></div><div class="abs mono cd" style="top:228px">b2=3;</div>
<div class="abs mono ln" style="top:245px">13</div><div class="abs" style="left:26px;top:253px;width:5px;height:1.300px;background:#333"></div><div class="abs mono cd" style="top:245px">U(1:16)=a1*t(1:16)+b1;</div>
<div class="abs mono ln" style="top:262px">14</div><div class="abs" style="left:26px;top:270px;width:5px;height:1.300px;background:#333"></div><div class="abs mono cd" style="top:262px">U(17:36)=a2*t(17:36)+b2;</div>
<div class="abs mono ln" style="top:279px">15</div><div class="abs" style="left:26px;top:287px;width:5px;height:1.300px;background:#333"></div><div class="abs mono cd" style="top:279px">plot(t,U);</div>
<div class="abs mono ln" style="top:296px">16</div><div class="abs" style="left:26px;top:304px;width:5px;height:1.300px;background:#333"></div><div class="abs mono cd" style="top:296px">stem(t,U);</div>
</div>
<div class="panel" style="left:326px;top:643px;width:811px;height:233px;overflow:hidden">
<div class="ptitle" style="padding-left:5px">Command Window</div><div class="pbtn" style="left:787px"></div>
<div class="abs" style="left:0;top:19px;width:809px;height:25px;background:#ffffcc;border-top:1px solid #dcdcb0;border-bottom:1px solid #c9c9a8"></div>
<div class="abs" style="left:8px;top:23px;font-size:12.300px;line-height:17px;color:#111;white-space:nowrap;-webkit-text-stroke:.15px #111">New to MATLAB? See resources for <span style="color:#0000e0;text-decoration:underline">Getting Started</span>.</div>
<svg class="abs" style="left:797px;top:24px" width="10" height="10" viewBox="0 0 10 10"><path d="M1.500 1.500l7 7M8.500 1.500l-7 7" stroke="#111" stroke-width="1.600"/></svg>
<div class="abs" style="left:0;top:45px;width:18px;height:187px;background:#f1f1f1"></div>
<div class="abs mono cw" style="top:48px;color:#c8101a">Error using <span style="text-decoration:underline">&nbsp;^&nbsp;</span></div>
<div class="abs mono cw" style="top:65px;color:#c8101a">Incorrect dimensions for raising a matrix to a power. Check that the matrix is</div>
<div class="abs mono cw" style="top:82px;color:#c8101a">square and the power is a scalar. To perform elementwise matrix powers, use '.^'.</div>
<div class="abs mono cw" style="top:116px;color:#c8101a">Error in <span style="text-decoration:underline;font-weight:bold">lab1</span> (<span style="text-decoration:underline">line 31</span>)</div>
<div class="abs mono cw" style="top:133px;color:#c8101a">Sw = y^e;</div>
<div class="abs mono cw" style="top:167px">&gt;&gt; lab1</div>
<div class="abs mono cw" style="top:184px">&gt;&gt; lab1</div>
<div class="abs mono cw" style="top:201px">&gt;&gt;</div>
<div class="abs" style="left:4px;top:200px;font-family:'Liberation Serif',serif;font-style:italic;font-weight:bold;font-size:13.500px;line-height:17px;color:#222;letter-spacing:-.4px">fx</div>
<div class="dn" style="left:11px;top:214px;border-left-width:2.500px;border-right-width:2.500px;border-top-width:3px"></div>
</div>
<svg width="0" height="0" style="position:absolute"><defs><linearGradient id="gw" x1="0" y1="0" x2="0" y2="1"><stop offset="0" stop-color="#fff8d0"/><stop offset="1" stop-color="#f8d85c"/></linearGradient><g id="wsic"><rect x=".500" y=".500" width="15" height="15" fill="#fbfdff" stroke="#6c7c94"/><rect x="1" y="8" width="14" height="7" fill="url(#gw)"/><path d="M.500 7.500h15M8 .500v15" stroke="#6c7c94"/></g></defs></svg>
<div class="panel" style="left:1149px;top:149px;width:290px;height:727px;overflow:hidden">
<div class="ptitle" style="padding-left:5px">Workspace</div><div class="pbtn" style="left:266px"></div>
<div class="abs" style="left:0;top:18px;width:288px;height:18px;background:linear-gradient(#ffffff,#f3f3f3)"></div>
<div class="abs" style="left:5px;top:21px;font-family:'DejaVu Sans Condensed','DejaVu Sans',sans-serif;font-size:11px;line-height:14px;color:#111">Name</div>
<div class="abs" style="left:38px;top:24px;width:0;height:0;border-left:4px solid transparent;border-right:4px solid transparent;border-bottom:7px solid #8a8a8a"></div>
<div class="abs" style="left:130px;top:21px;width:1px;height:13px;background:#d4d4d4"></div>
<div class="abs" style="left:134px;top:21px;font-family:'DejaVu Sans Condensed','DejaVu Sans',sans-serif;font-size:11px;line-height:14px;color:#111">Value</div>
<div class="abs" style="left:260px;top:21px;width:1px;height:13px;background:#d4d4d4"></div>
<svg class="abs" style="left:1px;top:36px" width="16" height="16" viewBox="0 0 16 16"><use href="#wsic"/></svg><div class="row" style="left:20px;top:36px;font-size:12.500px;line-height:18px">a1</div><div class="row" style="left:135px;top:36px;font-size:12.500px;line-height:18px;">1000</div>
<svg class="abs" style="left:1px;top:53px" width="16" height="16" viewBox="0 0 16 16"><use href="#wsic"/></svg><div class="row" style="left:20px;top:53px;font-size:12.500px;line-height:18px">a2</div><div class="row" style="left:135px;top:53px;font-size:12.500px;line-height:18px;">1000</div>
<svg class="abs" style="left:1px;top:70px" width="16" height="16" viewBox="0 0 16 16"><use href="#wsic"/></svg><div class="row" style="left:20px;top:70px;font-size:12.500px;line-height:18px">b1</div><div class="row" style="left:135px;top:70px;font-size:12.500px;line-height:18px;">1</div>
<svg class="abs" style="left:1px;top:87px" width="16" height="16" viewBox="0 0 16 16"><use href="#wsic"/></svg><div class="row" style="left:20px;top:87px;font-size:12.500px;line-height:18px">b2</div><div class="row" style="left:135px;top:87px;font-size:12.500px;line-height:18px;">3</div>
<svg class="abs" style="left:1px;top:104px" width="16" height="16" viewBox="0 0 16 16"><use href="#wsic"/></svg><div class="row" style="left:20px;top:104px;font-size:12.500px;line-height:18px">e</div><div class="row" style="left:135px;top:104px;font-size:12.500px;line-height:18px;font-style:italic;color:#2a5b88">29x629 complex ...</div>
<svg class="abs" style="left:1px;top:121px" width="16" height="16" viewBox="0 0 16 16"><use href="#wsic"/></svg><div class="row" style="left:20px;top:121px;font-size:12.500px;line-height:18px">Fd</div><div class="row" style="left:135px;top:121px;font-size:12.500px;line-height:18px;">5000</div>
<svg class="abs" style="left:1px;top:138px" width="16" height="16" viewBox="0 0 16 16"><use href="#wsic"/></svg><div class="row" style="left:20px;top:138px;font-size:12.500px;line-height:18px">Fs</div><div class="row" style="left:135px;top:138px;font-size:12.500px;line-height:18px;">5000</div>
<svg class="abs" style="left:1px;top:155px" width="16" height="16" viewBox="0 0 16 16"><use href="#wsic"/></svg><div class="row" style="left:20px;top:155px;font-size:12.500px;line-height:18px">k</div><div class="row" style="left:135px;top:155px;font-size:12.500px;line-height:18px;font-style:italic;color:#2a5b88">29x1 double</div>
<svg class="abs" style="left:1px;top:172px" width="16" height="16" viewBox="0 0 16 16"><use href="#wsic"/></svg><div class="row" style="left:20px;top:172px;font-size:12.500px;line-height:18px">t</div><div class="row" style="left:135px;top:172px;font-size:12.500px;line-height:18px;font-style:italic;color:#2a5b88">1x36 double</div>
<svg class="abs" style="left:1px;top:189px" width="16" height="16" viewBox="0 0 16 16"><use href="#wsic"/></svg><div class="row" style="left:20px;top:189px;font-size:12.500px;line-height:18px">T</div><div class="row" style="left:135px;top:189px;font-size:12.500px;line-height:18px;">2.0000e-04</div>
<svg class="abs" style="left:1px;top:206px" width="16" height="16" viewBox="0 0 16 16"><use href="#wsic"/></svg><div class="row" style="left:20px;top:206px;font-size:12.500px;line-height:18px">t1</div><div class="row" style="left:135px;top:206px;font-size:12.500px;line-height:18px;font-style:italic;color:#2a5b88">1x16 double</div>
<svg class="abs" style="left:1px;top:223px" width="16" height="16" viewBox="0 0 16 16"><use href="#wsic"/></svg><div class="row" style="left:20px;top:223px;font-size:12.500px;line-height:18px">T1</div><div class="row" style="left:135px;top:223px;font-size:12.500px;line-height:18px;">0.0030</div>
<svg class="abs" style="left:1px;top:240px" width="16" height="16" viewBox="0 0 16 16"><use href="#wsic"/></svg><div class="row" style="left:20px;top:240px;font-size:12.500px;line-height:18px">t2</div><div class="row" style="left:135px;top:240px;font-size:12.500px;line-height:18px;font-style:italic;color:#2a5b88">1x20 double</div>
<svg class="abs" style="left:1px;top:257px" width="16" height="16" viewBox="0 0 16 16"><use href="#wsic"/></svg><div class="row" style="left:20px;top:257px;font-size:12.500px;line-height:18px">T2</div><div class="row" style="left:135px;top:257px;font-size:12.500px;line-height:18px;">0.0070</div>
<svg class="abs" style="left:1px;top:274px" width="16" height="16" viewBox="0 0 16 16"><use href="#wsic"/></svg><div class="row" style="left:20px;top:274px;font-size:12.500px;line-height:18px">U</div><div class="row" style="left:135px;top:274px;font-size:12.500px;line-height:18px;font-style:italic;color:#2a5b88">1x36 double</div>
<svg class="abs" style="left:1px;top:291px" width="16" height="16" viewBox="0 0 16 16"><use href="#wsic"/></svg><div class="row" style="left:20px;top:291px;font-size:12.500px;line-height:18px">U1</div><div class="row" style="left:135px;top:291px;font-size:12.500px;line-height:18px;">1</div>
<svg class="abs" style="left:1px;top:308px" width="16" height="16" viewBox="0 0 16 16"><use href="#wsic"/></svg><div class="row" style="left:20px;top:308px;font-size:12.500px;line-height:18px">U2</div><div class="row" style="left:135px;top:308px;font-size:12.500px;line-height:18px;">4</div>
<svg class="abs" style="left:1px;top:325px" width="16" height="16" viewBox="0 0 16 16"><use href="#wsic"/></svg><div class="row" style="left:20px;top:325px;font-size:12.500px;line-height:18px">U3</div><div class="row" style="left:135px;top:325px;font-size:12.500px;line-height:18px;">6</div>
<svg class="abs" style="left:1px;top:342px" width="16" height="16" viewBox="0 0 16 16"><use href="#wsic"/></svg><div class="row" style="left:20px;top:342px;font-size:12.500px;line-height:18px">U4</div><div class="row" style="left:135px;top:342px;font-size:12.500px;line-height:18px;">10</div>
<svg class="abs" style="left:1px;top:359px" width="16" height="16" viewBox="0 0 16 16"><use href="#wsic"/></svg><div class="row" style="left:20px;top:359px;font-size:12.500px;line-height:18px">w</div><div class="row" style="left:135px;top:359px;font-size:12.500px;line-height:18px;font-style:italic;color:#2a5b88">1x629 double</div>
<svg class="abs" style="left:1px;top:376px" width="16" height="16" viewBox="0 0 16 16"><use href="#wsic"/></svg><div class="row" style="left:20px;top:376px;font-size:12.500px;line-height:18px">y</div><div class="row" style="left:135px;top:376px;font-size:12.500px;line-height:18px;font-style:italic;color:#2a5b88">1x36 double</div>
<svg class="abs" style="left:1px;top:393px" width="16" height="16" viewBox="0 0 16 16"><use href="#wsic"/></svg><div class="row" style="left:20px;top:393px;font-size:12.500px;line-height:18px">y1</div><div class="row" style="left:135px;top:393px;font-size:12.500px;line-height:18px;font-style:italic;color:#2a5b88">1x16 double</div>
<svg class="abs" style="left:1px;top:410px" width="16" height="16" viewBox="0 0 16 16"><use href="#wsic"/></svg><div class="row" style="left:20px;top:410px;font-size:12.500px;line-height:18px">y2</div><div class="row" style="left:135px;top:410px;font-size:12.500px;line-height:18px;font-style:italic;color:#2a5b88">1x20 double</div>
</div>
<!-- FIGURE -->
<div class="abs" style="left:439px;top:30px;width:560px;height:493px;border-radius:5px;background:#f0f0f0;box-shadow:0 0 1px 0 rgba(0,0,0,.5),0 20px 32px 0 rgba(0,0,0,.3),0 4px 12px rgba(0,0,0,.11)"></div>
<div class="abs" style="left:439px;top:30px;width:560px;height:22px;border-radius:5px 5px 0 0;background:linear-gradient(#ebebeb,#d2d2d2);border-bottom:1px solid #b2b2b2"></div>
<div class="abs" style="left:447px;top:35px;width:12px;height:12px;border-radius:50%;background:#fc4a54;border:.500px solid #df3a42"></div>
<div class="abs" style="left:467px;top:35px;width:12px;height:12px;border-radius:50%;background:#fdb70f;border:.500px solid #de9f12"></div>
<div class="abs" style="left:487px;top:35px;width:12px;height:12px;border-radius:50%;background:#1ec62c;border:.500px solid #18a824"></div>
<div class="abs" style="left:439px;top:32px;width:560px;text-align:center;font-size:12px;line-height:18px;color:#4d4d4d;-webkit-text-stroke:.15px #4d4d4d;margin-top:1px">Figure 1</div>
<div class="abs" style="left:439px;top:52px;width:560px;height:22px;background:#fafafa;border-bottom:1px solid #c2c2c2"></div>
<div class="abs" style="left:448px;top:54px;font-size:13.600px;line-height:18px;color:#111;white-space:nowrap;-webkit-text-stroke:.25px #111">File</div><div class="abs" style="left:490px;top:54px;font-size:13.600px;line-height:18px;color:#111;white-space:nowrap;-webkit-text-stroke:.25px #111">Edit</div><div class="abs" style="left:534.5px;top:54px;font-size:13.600px;line-height:18px;color:#111;white-space:nowrap;-webkit-text-stroke:.25px #111">View</div><div class="abs" style="left:584px;top:54px;font-size:13.600px;line-height:18px;color:#111;white-space:nowrap;-webkit-text-stroke:.25px #111">Insert</div><div class="abs" style="left:641px;top:54px;font-size:13.600px;line-height:18px;color:#111;white-space:nowrap;-webkit-text-stroke:.25px #111">Tools</div><div class="abs" style="left:697.5px;top:54px;font-size:13.600px;line-height:18px;color:#111;white-space:nowrap;-webkit-text-stroke:.25px #111">Desktop</div><div class="abs" style="left:770.5px;top:54px;font-size:13.600px;line-height:18px;color:#111;white-space:nowrap;-webkit-text-stroke:.25px #111">Window</div><div class="abs" style="left:843.5px;top:54px;font-size:13.600px;line-height:18px;color:#111;white-space:nowrap;-webkit-text-stroke:.25px #111">Help</div>
<svg class="abs" style="left:988px;top:59px" width="8" height="7" viewBox="0 0 8 7"><path d="M.800 1l5 4.300" fill="none" stroke="#111" stroke-width="1.500"/><path d="M7.300 6.500h-4.800l4.800-4.300z" fill="#111"/></svg>
<div class="abs" style="left:439px;top:74px;width:560px;height:28px;background:#eeeeee;border-top:1px solid #fafafa;border-bottom:1px solid #b4b4b4"></div><div class="abs" style="left:439px;top:102px;width:560px;height:1px;background:#f8f8f8"></div>
<svg class="abs" style="left:439px;top:74px" width="560" height="28" viewBox="439 74 560 28">
<defs><linearGradient id="gp" x1="0" y1="0" x2="1" y2="1"><stop offset="0" stop-color="#ffffff"/><stop offset="1" stop-color="#b8d0f0"/></linearGradient>
<linearGradient id="gcb" x1="0" y1="0" x2="0" y2="1"><stop offset="0" stop-color="#8aa0e8"/><stop offset=".5" stop-color="#9fe0d0"/><stop offset=".8" stop-color="#f4e8a0"/><stop offset="1" stop-color="#f0b088"/></linearGradient></defs>
<!-- new -->
<path d="M447.500 81.500h8l4 4v9.500h-12z" fill="url(#gp)" stroke="#5868a8"/><path d="M455.500 81.500v4h4" fill="#e8f0fb" stroke="#5868a8" stroke-width=".8"/>
<path d="M446.500 79.500v6M443.500 82.500h6M444.400 80.400l4.200 4.200M448.600 80.400l-4.200 4.200" stroke="#f07830" stroke-width="1.100"/><circle cx="446.500" cy="82.500" r="1.500" fill="#ffd8a0"/>
<!-- open -->
<path d="M470.500 84.500h4l1 1.500h7.500v8.500h-13z" fill="#f8dc6c" stroke="#b89428"/><path d="M470.500 94.500l2.500-6h12.500l-2.500 6z" fill="#fbe88c" stroke="#b89428"/><path d="M478 84q3-3 6-1.500l.8-1.200.7 4-3.800-.2 1-1.200q-2-1-4 .6z" fill="#5888d0" stroke="#3860a8" stroke-width=".5"/>
<!-- save -->
<rect x="497.500" y="81.500" width="14" height="13" rx="1" fill="#5050b8" stroke="#383890"/><rect x="500" y="82" width="9" height="5.500" fill="#e0e4f8"/><rect x="500.500" y="90" width="7.500" height="4.500" fill="#282858"/><rect x="505" y="91" width="2" height="3" fill="#d8d8e8"/>
<!-- print -->
<path d="M526.500 80.500h6l2 5h-9z" fill="#e8f0fa" stroke="#8898b0"/><path d="M523.500 86.500q0-1.500 2-1.500h9.500q2 0 2 1.500v5l-2.500 3h-8.500l-2.500-3z" fill="#c8c8c8" stroke="#707070"/><path d="M524 89h13" stroke="#8a8a8a"/><path d="M525.500 92h10" stroke="#f4f4f4"/>
<!-- pointer -->
<path d="M561.500 81.500v12l3-2.800 2 4.600 1.800-.8-2-4.500h4z" fill="#fff" stroke="#111" stroke-width="1.100" stroke-linejoin="round"/>
<!-- zoom in -->
<path d="M599.500 88.500l5.500 5" stroke="#c88838" stroke-width="2.800" stroke-linecap="round"/><path d="M599.500 88.500l5.500 5" stroke="#f0b868" stroke-width="1.200" stroke-linecap="round"/><circle cx="595.500" cy="85" r="4.700" fill="#e8f4fc" stroke="#78a8d8" stroke-width="1.300"/><path d="M593 85h5M595.500 82.500v5" stroke="#2848b0" stroke-width="1.300"/>
<!-- zoom out -->
<path d="M625.500 88.500l5.500 5" stroke="#c88838" stroke-width="2.800" stroke-linecap="round"/><path d="M625.500 88.500l5.500 5" stroke="#f0b868" stroke-width="1.200" stroke-linecap="round"/><circle cx="621.500" cy="85" r="4.700" fill="#e8f4fc" stroke="#78a8d8" stroke-width="1.300"/><path d="M619 85h5" stroke="#2848b0" stroke-width="1.300"/>
<!-- hand -->
<path d="M646 89l-2.800-2q-1.200-.2-.7 1l3.500 5.500q1 2 3 2.500h4q2-1 2.500-4l.8-6.500q-.3-1.200-1.500-.5l-.6 3 -.2-5.500q-.6-1.200-1.700-.2l-.3 4.700-.6-5.800q-.8-1-1.800 0l-.1 5.800-1-4.800q-1-1-1.800 0z" fill="#fbe0c8" stroke="#4060b0" stroke-width=".9" stroke-linejoin="round"/>
<!-- rotate -->
<path d="M671.500 84.500a6.300 6.300 0 1 1 -1 6" fill="none" stroke="#384878" stroke-width="2.500"/><path d="M668.500 81l1 5.500 4.800-2.500z" fill="#384878"/><path d="M673.500 86l3-1.200 3 1.200v3.800l-3 1.500-3-1.500z M673.500 86l3 1.300 3-1.300M676.500 87.300v4" fill="#fff" stroke="#384878" stroke-width=".8"/>
<!-- data cursor -->
<rect x="699.500" y="80.500" width="10.500" height="9.500" fill="#fbf6b8" stroke="#a8a060"/><path d="M701.500 83h6.500M701.500 85h6.500M701.500 87h6.500" stroke="#8a8030" stroke-width=".9"/><path d="M694.500 81q1.500 9 14 14.500" fill="none" stroke="#3030c0" stroke-width=".9" stroke-dasharray="3 1.500"/><path d="M698.500 86.500v8M694.500 90.500h8" stroke="#111" stroke-width="2"/>
<!-- brush -->
<rect x="719" y="78" width="18" height="20" rx="3" fill="#fbfbfb" stroke="#e0e0e0"/><path d="M726.500 88.500l8-9.500 1.200 1-7 10z" fill="#6888d0" stroke="#3858a8" stroke-width=".6"/><path d="M720.500 94q1-5 4.500-6l2.500 2q-1.500 4-7 4z" fill="#585858" stroke="#333" stroke-width=".6"/><rect x="730" y="89" width="5" height="5" fill="#f01020"/>
<path d="M745 87h5l-2.500 3z" fill="#222"/>
<!-- link -->
<rect x="769.500" y="80.500" width="10" height="8" fill="#f0f4fa" stroke="#4860a0"/><rect x="769.500" y="80.500" width="10" height="2" fill="#4860a0"/><rect x="767.500" y="83.500" width="10" height="8" fill="#f4f8fc" stroke="#4860a0"/><rect x="767.500" y="83.500" width="10" height="1.500" fill="#6880b8"/>
<rect x="768" y="90.500" width="7.500" height="4" rx="2" fill="none" stroke="#384868" stroke-width="1.300"/><rect x="774.500" y="90.500" width="7.500" height="4" rx="2" fill="none" stroke="#384868" stroke-width="1.300"/><path d="M772 92.500h6" stroke="#9ab0d0" stroke-width="1.200"/>
<!-- colorbar -->
<rect x="804.500" y="80.500" width="9.500" height="14" fill="url(#gcb)" stroke="#4050a0"/>
<!-- legend -->
<rect x="827.500" y="80.500" width="14.500" height="14" fill="#f4f6fc" stroke="#4050a0" stroke-width="1.200"/><rect x="829.500" y="83" width="4.500" height="3.500" fill="#e06068"/><rect x="829.500" y="89" width="4.500" height="3.500" fill="#6068d8"/><path d="M836 85h4M836 91h4" stroke="#111" stroke-width="1.100"/>
<!-- gray -->
<rect x="864.500" y="83.500" width="10" height="10" rx="1" fill="#a0a0a0" stroke="#b8b8b8"/><path d="M864.500 84.500l1.500-1.500h9l-1 1z" fill="#c4c4c4"/>
<!-- film -->
<rect x="887.500" y="81.500" width="14.500" height="13" fill="#4858a8" stroke="#303880"/><rect x="889.500" y="84" width="9" height="8" fill="#fff"/><path d="M888 93.300h14" stroke="#c8d0f0" stroke-width=".9" stroke-dasharray="1 1"/><path d="M900.500 84v8" stroke="#c8d0f0" stroke-width=".9" stroke-dasharray="1 1"/>
</svg>
<svg class="abs" style="left:0;top:0" width="1440" height="900" viewBox="0 0 1440 900">
<rect x="512.5" y="134.5" width="433.5" height="342.0" fill="#fff" stroke="#262626" stroke-width="1"/>
<path d="M512.50 476.5v-4M512.50 134.5v4M574.43 476.5v-4M574.43 134.5v4M636.36 476.5v-4M636.36 134.5v4M698.29 476.5v-4M698.29 134.5v4M760.21 476.5v-4M760.21 134.5v4M822.14 476.5v-4M822.14 134.5v4M884.07 476.5v-4M884.07 134.5v4M946.00 476.5v-4M946.00 134.5v4M512.5 476.50h4M946.0 476.50h-4M512.5 442.30h4M946.0 442.30h-4M512.5 408.10h4M946.0 408.10h-4M512.5 373.90h4M946.0 373.90h-4M512.5 339.70h4M946.0 339.70h-4M512.5 305.50h4M946.0 305.50h-4M512.5 271.30h4M946.0 271.30h-4M512.5 237.10h4M946.0 237.10h-4M512.5 202.90h4M946.0 202.90h-4M512.5 168.70h4M946.0 168.70h-4M512.5 134.50h4M946.0 134.50h-4" stroke="#262626" stroke-width="1" fill="none"/>
<path d="M512.50 476.5V442.30M524.89 476.5V435.46M537.27 476.5V428.62M549.66 476.5V421.78M562.04 476.5V414.94M574.43 476.5V408.10M586.81 476.5V401.26M599.20 476.5V394.42M611.59 476.5V387.58M623.97 476.5V380.74M636.36 476.5V373.90M648.74 476.5V367.06M661.13 476.5V360.22M673.51 476.5V353.38M685.90 476.5V346.54M698.29 476.5V339.70M710.67 476.5V264.46M723.06 476.5V257.62M735.44 476.5V250.78M747.83 476.5V243.94M760.21 476.5V237.10M772.60 476.5V230.26M784.99 476.5V223.42M797.37 476.5V216.58M809.76 476.5V209.74M822.14 476.5V202.90M834.53 476.5V196.06M846.91 476.5V189.22M859.30 476.5V182.38M871.69 476.5V175.54M884.07 476.5V168.70M896.46 476.5V161.86M908.84 476.5V155.02M921.23 476.5V148.18M933.61 476.5V141.34M946.00 476.5V134.50" stroke="#0b69aa" stroke-width="1" fill="none"/>
<g fill="none" stroke="#0b69aa" stroke-width="1"><circle cx="512.50" cy="442.30" r="3"/><circle cx="524.89" cy="435.46" r="3"/><circle cx="537.27" cy="428.62" r="3"/><circle cx="549.66" cy="421.78" r="3"/><circle cx="562.04" cy="414.94" r="3"/><circle cx="574.43" cy="408.10" r="3"/><circle cx="586.81" cy="401.26" r="3"/><circle cx="599.20" cy="394.42" r="3"/><circle cx="611.59" cy="387.58" r="3"/><circle cx="623.97" cy="380.74" r="3"/><circle cx="636.36" cy="373.90" r="3"/><circle cx="648.74" cy="367.06" r="3"/><circle cx="661.13" cy="360.22" r="3"/><circle cx="673.51" cy="353.38" r="3"/><circle cx="685.90" cy="346.54" r="3"/><circle cx="698.29" cy="339.70" r="3"/><circle cx="710.67" cy="264.46" r="3"/><circle cx="723.06" cy="257.62" r="3"/><circle cx="735.44" cy="250.78" r="3"/><circle cx="747.83" cy="243.94" r="3"/><circle cx="760.21" cy="237.10" r="3"/><circle cx="772.60" cy="230.26" r="3"/><circle cx="784.99" cy="223.42" r="3"/><circle cx="797.37" cy="216.58" r="3"/><circle cx="809.76" cy="209.74" r="3"/><circle cx="822.14" cy="202.90" r="3"/><circle cx="834.53" cy="196.06" r="3"/><circle cx="846.91" cy="189.22" r="3"/><circle cx="859.30" cy="182.38" r="3"/><circle cx="871.69" cy="175.54" r="3"/><circle cx="884.07" cy="168.70" r="3"/><circle cx="896.46" cy="161.86" r="3"/><circle cx="908.84" cy="155.02" r="3"/><circle cx="921.23" cy="148.18" r="3"/><circle cx="933.61" cy="141.34" r="3"/><circle cx="946.00" cy="134.50" r="3"/></g>
<g font-family="'Liberation Sans',sans-serif" font-size="10px" fill="#262626" stroke="#262626" stroke-width=".2"><text x="512.0" y="492" text-anchor="middle">0</text><text x="573.9" y="492" text-anchor="middle">1</text><text x="635.9" y="492" text-anchor="middle">2</text><text x="697.8" y="492" text-anchor="middle">3</text><text x="759.7" y="492" text-anchor="middle">4</text><text x="821.6" y="492" text-anchor="middle">5</text><text x="883.6" y="492" text-anchor="middle">6</text><text x="945.5" y="492" text-anchor="middle">7</text><text x="507.500" y="480.5" text-anchor="end">0</text><text x="507.500" y="446.3" text-anchor="end">1</text><text x="507.500" y="412.1" text-anchor="end">2</text><text x="507.500" y="377.9" text-anchor="end">3</text><text x="507.500" y="343.7" text-anchor="end">4</text><text x="507.500" y="309.5" text-anchor="end">5</text><text x="507.500" y="275.3" text-anchor="end">6</text><text x="507.500" y="241.1" text-anchor="end">7</text><text x="507.500" y="206.9" text-anchor="end">8</text><text x="507.500" y="172.7" text-anchor="end">9</text><text x="507.500" y="138.5" text-anchor="end">10</text>
<text x="917.500" y="508.500" font-size="11.500px">×</text><text x="925" y="508.500" font-size="10px">10</text><text x="936.500" y="503.500" font-size="8px">-3</text></g>
</svg>
<!-- STATUS -->
<div class="abs" style="left:0;top:877px;width:1440px;height:23px;background:#eeeeee"></div>
<div class="abs" style="left:5px;top:881px;width:15.500px;height:15px;background:repeating-linear-gradient(90deg,#a0a0a0 0,#a0a0a0 2.700px,transparent 2.700px,transparent 4.150px);-webkit-mask-image:linear-gradient(#000,rgba(0,0,0,.3));mask-image:linear-gradient(#000,rgba(0,0,0,.3))"></div>
<div class="abs" style="left:22px;top:887px;width:0;height:0;border-left:2.500px solid transparent;border-right:2.500px solid transparent;border-bottom:3px solid #222"></div>
<div class="abs" style="left:35px;top:880px;width:1px;height:18px;background:#c4c4c4"></div>
<div class="abs" style="left:1009px;top:879px;width:284px;height:19px;border:1px solid #c2c2c2;border-right-color:#f8f8f8;border-bottom-color:#f8f8f8;font-size:12.500px;line-height:17px;padding-left:4px;color:#111">script</div>
<div class="abs" style="left:1295px;top:879px;width:127px;height:19px;border:1px solid #c2c2c2;border-right-color:#f8f8f8;border-bottom-color:#f8f8f8;font-size:12.500px;line-height:17px;color:#111;white-space:pre"><span class="abs" style="left:4px">Ln</span><span class="abs" style="left:32px">16</span><span class="abs" style="left:66px">Col</span><span class="abs" style="left:100px">11</span></div>
<div class="abs" style="left:325px;top:634px;width:813px;height:8px;background:#fafafa;border-top:1px solid #e2e2e2"></div>
<!-- splitter dots -->
<div class="abs" style="left:317px;top:510px;width:5px;height:5px;border-radius:50%;background:#c8c8c8;border:1px solid #b4b4b4"></div>
<div class="abs" style="left:1140px;top:510px;width:5px;height:5px;border-radius:50%;background:#c8c8c8;border:1px solid #b4b4b4"></div>
<div class="abs" style="left:728px;top:635px;width:5px;height:5px;border-radius:50%;background:#c8c8c8;border:1px solid #b4b4b4"></div>

</div>
</body>
</html>
